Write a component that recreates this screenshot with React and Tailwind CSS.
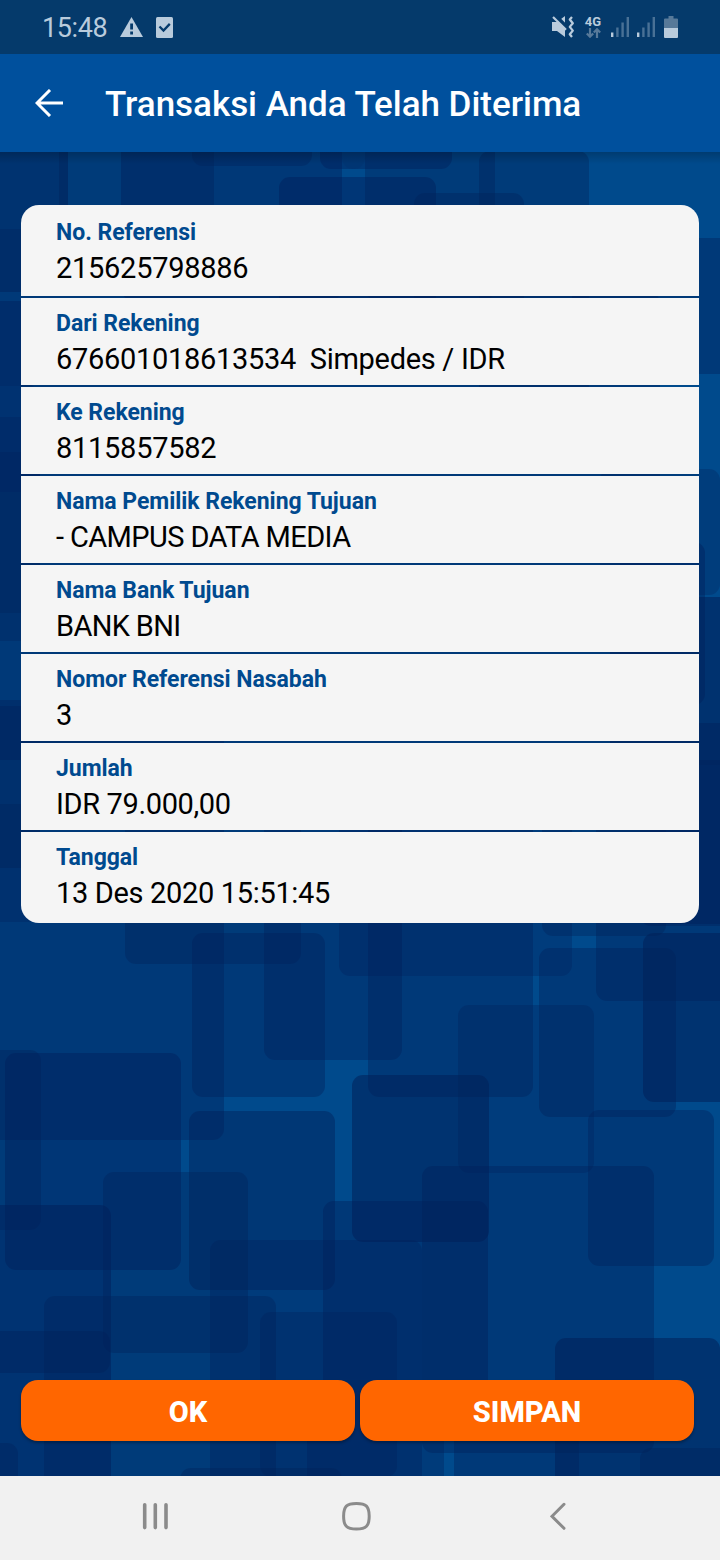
import React from "react";

const rows = [
  ["No. Referensi", "215625798886", "tracking-[-0.27px]"],
  ["Dari Rekening", "676601018613534\u00a0 Simpedes / IDR", "tracking-[-0.3px]"],
  ["Ke Rekening", "8115857582", "tracking-[-0.27px]"],
  ["Nama Pemilik Rekening Tujuan", "- CAMPUS DATA MEDIA", "tracking-[-0.6px]"],
  ["Nama Bank Tujuan", "BANK BNI", "tracking-[-0.65px]"],
  ["Nomor Referensi Nasabah", "3", "tracking-normal"],
  ["Jumlah", "IDR 79.000,00", "tracking-[-0.36px]"],
  ["Tanggal", "13 Des 2020 15:51:45", "tracking-[-0.33px]"],
];

// Overlapping translucent tiles: left, top, right, bottom, opacity
const tiles = [
  [-20, 100, 68, 292, 0.55],
  [59, 100, 214, 292, 0.36],
  [121, 100, 342, 300, 0.42],
  [192, 100, 312, 166, 0.36],
  [320, 100, 452, 169, 0.42],
  [279, 177, 436, 330, 0.45],
  [342, 100, 365, 169, 0.1],
  [365, 100, 495, 300, 0.36],
  [479, 151, 589, 400, 0.36],
  [414, 193, 524, 380, 0.36],
  [572, 238, 740, 374, 0.38],
  [-20, 229, 40, 292, 0.3],
  [-20, 292, 660, 760, 0.4],
  [-20, 301, 40, 386, 0.45],
  [-20, 386, 40, 492, 0.25],
  [-20, 417, 40, 613, 0.3],
  [-20, 452, 40, 641, 0.3],
  [-20, 706, 40, 868, 0.36],
  [-20, 804, 40, 922, 0.3],
  [600, 469, 720, 595, 0.3],
  [620, 542, 705, 705, 0.42],
  [610, 597, 740, 765, 0.58],
  [650, 723, 740, 924, 0.42],
  [640, 765, 740, 926, 0.4],
  [-40, 700, 224, 1140, 0.38],
  [125, 760, 301, 964, 0.36],
  [192, 933, 325, 1097, 0.38],
  [264, 760, 402, 1060, 0.38],
  [339, 760, 572, 976, 0.32],
  [368, 760, 533, 1097, 0.38],
  [542, 760, 666, 936, 0.36],
  [596, 760, 740, 1001, 0.4],
  [539, 948, 676, 1117, 0.38],
  [643, 933, 740, 1102, 0.55],
  [458, 1005, 594, 1173, 0.33],
  [-30, 1050, 41, 1230, 0.36],
  [5, 1053, 181, 1270, 0.45],
  [189, 1111, 335, 1290, 0.46],
  [103, 1172, 248, 1353, 0.36],
  [352, 1075, 489, 1242, 0.55],
  [588, 1110, 714, 1266, 0.38],
  [422, 1166, 654, 1453, 0.38],
  [323, 1201, 488, 1410, 0.42],
  [210, 1240, 422, 1520, 0.34],
  [-30, 1205, 111, 1520, 0.53],
  [-30, 1331, 110, 1373, 0.38],
  [44, 1296, 276, 1520, 0.36],
  [260, 1312, 397, 1477, 0.33],
  [307, 1410, 444, 1520, 0.35],
  [454, 1410, 579, 1520, 0.38],
  [555, 1338, 720, 1520, 0.55],
  [640, 1448, 740, 1520, 0.36],
  [-30, 1443, 18, 1520, 0.36],
  [180, 1468, 342, 1520, 0.36],
];

function Pattern() {
  return (
    <svg className="absolute inset-0 h-full w-full" viewBox="0 152 720 1324" aria-hidden="true">
      <rect x="0" y="152" width="720" height="1324" fill="#004a8c" />
      {tiles.map(([l, t, r, b, o], i) => (
        <rect key={i} x={l} y={t} width={r - l} height={b - t} rx="11" fill="#00205a" fillOpacity={o} />
      ))}
    </svg>
  );
}

function Signal() {
  return (
    <svg className="h-5 w-[18px]" viewBox="0 0 18 20" fill="#b9cbdc">
      <rect x="0" y="15.5" width="2.4" height="4.5" />
      <rect x="5.2" y="10.5" width="2.4" height="9.5" opacity=".38" />
      <rect x="10.4" y="5.5" width="2.4" height="14.5" opacity=".38" />
      <rect x="15.6" y="0" width="2.4" height="20" opacity=".38" />
    </svg>
  );
}

function StatusBar() {
  return (
    <div className="flex h-[54px] items-center bg-[#053a6b] pl-[42px] pr-[42px] text-[#b9cbdc]">
      <span className="w-[78px] pt-[2px] text-[27px] leading-none tracking-[-0.4px]">15:48</span>
      <svg className="h-5 w-[23px]" viewBox="0 0 23 20">
        <path d="M11.5 0 23 20H0Z" fill="#b9cbdc" />
        <path d="M10.2 6.5h2.800v6h-2.800zM10.2 14.600h2.800v2.800h-2.800z" fill="#053a6b" />
      </svg>
      <svg className="ml-[13px] h-[21px] w-[17px]" viewBox="0 0 17 21">
        <rect width="17" height="21" rx="1.5" fill="#b9cbdc" />
        <path d="m3.500 9.500 4 4 6.300-6.600" fill="none" stroke="#053a6b" strokeWidth="2.3" />
      </svg>
      <div className="flex-1" />
      <svg className="h-[22px] w-[23px]" viewBox="0 0 23 22" fill="none">
        <path d="M0 6h5l8-6v21l-8-6H0Z" fill="#b9cbdc" />
        <path d="M1 -2.500 15 11.500" stroke="#053a6b" strokeWidth="4" />
        <path d="m1 1 13 12.800" stroke="#b9cbdc" strokeWidth="2.2" />
        <path d="m20 1-2.200 2.500 3 3.700-3 3.700 3 3.700-3 3.700L20 21" stroke="#b9cbdc" strokeWidth="2.3" strokeLinejoin="round" />
      </svg>
      <div className="ml-[9px] mr-px flex w-[18px] flex-col items-center">
        <span className="text-[13px] font-bold leading-[12px]">4G</span>
        <svg className="h-[10px] w-[15px]" viewBox="0 0 15 10" fill="none" stroke="#577999" strokeWidth="2.2">
          <path d="M4 0v8.500M.8 5.500 4 8.700l3.200-3.200M11 10V1.500M7.800 4.500 11 1.300l3.200 3.200" />
        </svg>
      </div>
      <div className="ml-[8px] flex items-center gap-[8px]">
        <Signal />
        <Signal />
      </div>
      <svg className="ml-[9px] h-[22px] w-[14px]" viewBox="0 0 14 22">
        <path d="M4.500 0h5v2.500H13a1 1 0 0 1 1 1V12H0V3.500a1 1 0 0 1 1-1h3.500Z" fill="#577999" />
        <path d="M0 12h14v9a1 1 0 0 1-1 1H1a1 1 0 0 1-1-1Z" fill="#b9cbdc" />
      </svg>
    </div>
  );
}

function Header() {
  return (
    <header className="flex h-[98px] items-center bg-[#00509d] pl-[35px] text-white">
      <svg className="h-7 w-7" viewBox="0 0 28 28" fill="none" stroke="white" strokeWidth="3">
        <path d="M28 14H2M15 1 2 14l13 13" />
      </svg>
      <h1 className="ml-[42px] pt-[2px] text-[35px] font-medium leading-none tracking-[-0.03px]">
        Transaksi Anda Telah Diterima
      </h1>
    </header>
  );
}

function Row({ label, value, tracking }) {
  return (
    <div className="h-[87px] bg-[#f5f5f5] pl-[35px] pt-[13px] first:h-[91px] first:rounded-t-[18px] first:pt-[15px] last:h-[91px] last:rounded-b-[18px]">
      <div className="text-[23px] font-bold leading-[26px] tracking-[-0.04px] text-[#004a8f]">{label}</div>
      <div className={`mt-1 text-[29px] leading-[36px] text-black ${tracking}`}>{value}</div>
    </div>
  );
}

function Button({ children }) {
  return (
    <button className="h-[61px] w-[334px] rounded-[17px] bg-[#ff6600] pt-[3px] text-[29px] font-extrabold leading-none text-white shadow-[0_2px_3px_rgba(0,0,0,0.3)]">
      {children}
    </button>
  );
}

function NavBar() {
  return (
    <nav className="flex h-[84px] items-center bg-[#f1f1f1] pb-[4px] pl-[142px]">
      <svg className="h-7 w-[27px]" viewBox="0 0 27 28" stroke="#8b8b8b" strokeWidth="3.600" strokeLinecap="round">
        <path d="M2.700 2.800v22.800M13.300 2.800v22.800M24 2.800v22.800" />
      </svg>
      <svg className="ml-[172px] h-[30px] w-[30px]" viewBox="0 0 30 30" fill="none" stroke="#8b8b8b" strokeWidth="3">
        <path d="M15.400 2.400c9.800 0 12.800 3 12.800 12.800S25.200 28 15.400 28 2.600 25 2.600 15.200 5.600 2.400 15.400 2.400Z" />
      </svg>
      <svg className="ml-[179px] h-7 w-4" viewBox="0 0 16 28" fill="none" stroke="#8b8b8b" strokeWidth="3" strokeLinecap="round">
        <path d="M14 2.300 2 14.300l12 12" />
      </svg>
    </nav>
  );
}

export default function App() {
  return (
    <div className="flex h-[1560px] w-[720px] flex-col overflow-hidden font-[Roboto,sans-serif]">
      <StatusBar />
      <Header />
      <main className="relative h-[1324px]">
        <Pattern />
        <div className="absolute inset-x-0 top-0 h-3 bg-linear-to-b from-black/20 to-transparent" />
        <div className="relative flex h-full flex-col justify-between pb-[35px] pl-[21px] pr-[21px] pt-[53px]">
          <section className="flex flex-col gap-[2px]">
            {rows.map(([label, value, tracking]) => (
              <Row key={label} label={label} value={value} tracking={tracking} />
            ))}
          </section>
          <div className="flex gap-[5px]">
            <Button>OK</Button>
            <Button>SIMPAN</Button>
          </div>
        </div>
      </main>
      <NavBar />
    </div>
  );
}
